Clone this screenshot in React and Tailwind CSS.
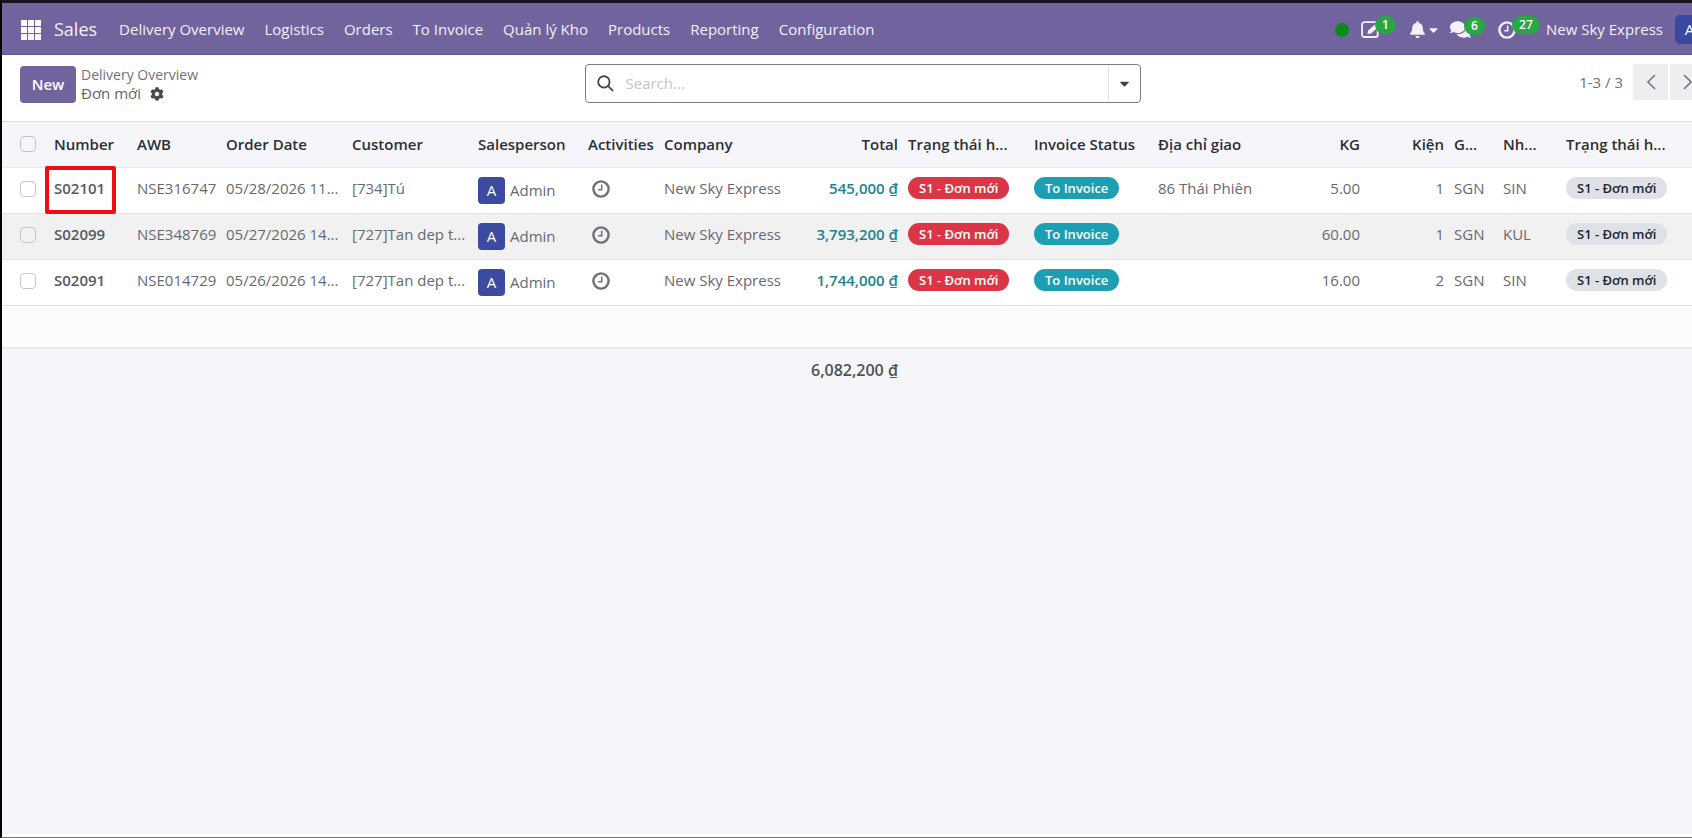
import React from "react";
import { FaBell, FaCaretDown, FaCog, FaComments } from "react-icons/fa";

const menu = [
  "Delivery Overview",
  "Logistics",
  "Orders",
  "To Invoice",
  "Quản lý Kho",
  "Products",
  "Reporting",
  "Configuration",
];

const orders = [
  { number: "S02101", awb: "NSE316747", date: "05/28/2026 11...", customer: "[734]Tú", total: "545,000 ₫", address: "86 Thái Phiên", kg: "5.00", pcs: "1", from: "SGN", to: "SIN", marked: true },
  { number: "S02099", awb: "NSE348769", date: "05/27/2026 14...", customer: "[727]Tan dep t...", total: "3,793,200 ₫", address: "", kg: "60.00", pcs: "1", from: "SGN", to: "KUL" },
  { number: "S02091", awb: "NSE014729", date: "05/26/2026 14...", customer: "[727]Tan dep t...", total: "1,744,000 ₫", address: "", kg: "16.00", pcs: "2", from: "SGN", to: "SIN" },
];

const headers = [
  ["Number"],
  ["AWB"],
  ["Order Date"],
  ["Customer"],
  ["Salesperson"],
  ["Activities"],
  ["Company"],
  ["Total", "text-right"],
  ["Trạng thái h..."],
  ["Invoice Status"],
  ["Địa chỉ giao"],
  ["KG", "text-right"],
  ["Kiện", "text-right"],
  ["G..."],
  ["Nh..."],
];

function Clock({ className }) {
  return (
    <svg viewBox="0 0 18 18" className={className} fill="none" stroke="currentColor" aria-hidden="true">
      <circle cx="9" cy="9" r="7.6" strokeWidth="2.4" />
      <path d="M9.7 4.6v5.1H6.2" strokeWidth="1.5" />
    </svg>
  );
}

function Count({ children }) {
  return (
    <span className="absolute bottom-[5px] left-[14px] rounded-full bg-[#28a745] px-[7px] text-[12px] leading-[18px] font-semibold text-white">
      {children}
    </span>
  );
}

function Tag({ className, children }) {
  return (
    <span className={`block w-fit rounded-full px-[11px] text-[13px] leading-[22px] font-semibold ${className}`}>
      {children}
    </span>
  );
}

function Tick({ label }) {
  return (
    <input
      type="checkbox"
      aria-label={label}
      className="block size-4 appearance-none rounded-[4px] border border-[#c4c6ca] bg-transparent"
    />
  );
}

function NavBar() {
  return (
    <nav className="flex h-[52px] items-center border-b border-[#5f5487] bg-[#71639e] px-4 pt-[2px] pr-[17px] text-[15px] text-[#f3f0fa]">
      <button aria-label="Apps" className="ml-[3px] mr-[13px] text-white">
        <svg viewBox="0 0 20 20" className="size-5" fill="currentColor" aria-hidden="true">
          <path d="M0 0h6v6H0zM7 0h6v6H7zM14 0h6v6h-6zM0 7h6v6H0zM7 7h6v6H7zM14 7h6v6h-6zM0 14h6v6H0zM7 14h6v6H7zM14 14h6v6h-6z" />
        </svg>
      </button>
      <a href="#sales" className="mr-[22px] text-[18px]">Sales</a>
      <div className="flex gap-5">
        {menu.map((m) => (
          <a key={m} href="#menu" className="whitespace-nowrap">{m}</a>
        ))}
      </div>
      <div className="ml-auto flex items-center">
        <span className="mr-[12px] size-[14px] rounded-full bg-[#0b8a1c]" />
        <button aria-label="Notes" className="relative mr-[30px]">
          <svg viewBox="0 0 18 18" className="size-[18px]" fill="none" stroke="currentColor" aria-hidden="true">
            <path d="M15 1.2H3.4A2.3 2.3 0 0 0 1.1 3.5v10.2A2.3 2.3 0 0 0 3.4 16h11a2.3 2.3 0 0 0 2.3-2.3V9" strokeWidth="1.8" />
            <path d="M6.5 13l.6-3.5L14 3.6l2.8 2.8-6.7 6z" fill="currentColor" stroke="none" />
          </svg>
          <Count>1</Count>
        </button>
        <button aria-label="Notifications" className="mr-[12px] flex items-center gap-[3px]">
          <FaBell className="size-[17px]" />
          <FaCaretDown className="h-[14px] w-[9px]" />
        </button>
        <button aria-label="Messages" className="relative mr-[27px]">
          <FaComments className="size-[21px]" />
          <Count>6</Count>
        </button>
        <button aria-label="Activities" className="relative mr-[30px]">
          <Clock className="size-[18px]" />
          <Count>27</Count>
        </button>
        <span className="mr-[12px] whitespace-nowrap">New Sky Express</span>
        <button aria-label="User menu" className="size-[29px] rounded-[5px] bg-[#3949a0] text-[15px] text-white">A</button>
      </div>
    </nav>
  );
}

function ControlBar() {
  return (
    <div className="flex h-[67px] items-start border-b border-[#d8dadd] bg-white px-[18px] pr-4 text-[15px]">
      <div className="flex min-w-0 flex-1 items-center gap-[5px] pt-[10px]">
        <button className="h-[37px] w-[56px] rounded-[4px] bg-[#71639e] font-semibold text-white">New</button>
        <div className="leading-[19px]">
          <a href="#overview" className="block text-[14px] font-medium text-[#71717f]">Delivery Overview</a>
          <div className="flex items-center gap-[9px] text-[#5f636a]">
            Đơn mới
            <button aria-label="Actions" className="text-[#454b54]"><FaCog className="size-[14px]" /></button>
          </div>
        </div>
      </div>
      <div className="mt-[9px] flex h-[39px] w-[556px] items-center rounded-[4px] border border-[#7b7d82]">
        <svg viewBox="0 0 18 18" className="ml-[11px] size-[17px] shrink-0 text-[#42464d]" fill="none" stroke="currentColor" strokeWidth="1.9" aria-hidden="true">
          <circle cx="7.3" cy="7.3" r="6" />
          <path d="M11.6 11.6l5.4 5.2" />
        </svg>
        <input aria-label="Search" placeholder="Search..." className="ml-[12px] min-w-0 flex-1 outline-none placeholder:text-[#c3c5cb]" />
        <button aria-label="Search options" className="flex h-full w-[32px] items-center justify-center border-l border-[#e3e4e7] text-[#3c4047]">
          <FaCaretDown className="size-[15px]" />
        </button>
      </div>
      <div className="flex flex-1 items-center justify-end gap-[2px] pt-[9px]">
        <span className="mr-[8px] text-[#6b6f76]">1-3 / 3</span>
        <button aria-label="Previous" className="flex h-[36px] w-[35px] items-center justify-center bg-[#eeeef0] text-[#74777d]">
          <svg viewBox="0 0 10 16" className="h-4 w-[10px]" fill="none" stroke="currentColor" strokeWidth="1.6" aria-hidden="true"><path d="M9 1L2 8l7 7" /></svg>
        </button>
        <button aria-label="Next" className="flex h-[36px] w-[35px] items-center justify-center bg-[#eeeef0] text-[#74777d]">
          <svg viewBox="0 0 10 16" className="h-4 w-[10px]" fill="none" stroke="currentColor" strokeWidth="1.6" aria-hidden="true"><path d="M1 1l7 7-7 7" /></svg>
        </button>
      </div>
    </div>
  );
}

function OrderRow({ o }) {
  return (
    <tr className="h-[46px] border-b border-[#e2e3e6] bg-white whitespace-nowrap even:bg-[#f1f1f1] [&>td]:px-[5px] [&>td]:pb-[3px]">
      <td className="pl-[18px]!"><Tick label={`Select ${o.number}`} /></td>
      <td className="relative font-semibold text-[#565a61]">
        {o.number}
        {o.marked && <span className="absolute -top-[2px] -left-[4px] h-[48px] w-[71px] rounded-[2px] border-4 border-[#f20c14]" />}
      </td>
      <td>{o.awb}</td>
      <td>{o.date}</td>
      <td>{o.customer}</td>
      <td className="pb-0!">
        <span className="flex items-center gap-[5px]">
          <span className="flex size-[27px] items-center justify-center rounded-[4px] bg-[#3c4ba0] text-[15px] text-white">A</span>
          Admin
        </span>
      </td>
      <td className="pl-[9px]!">
        <button aria-label="Plan activity" className="block text-[#6c7077]"><Clock className="size-[18px]" /></button>
      </td>
      <td>New Sky Express</td>
      <td className="text-right font-semibold text-[#1b8391]">{o.total}</td>
      <td className="pb-[5px]!"><Tag className="bg-[#dc3545] text-white">S1 - Đơn mới</Tag></td>
      <td className="pb-[5px]!"><Tag className="bg-[#1c9fb2] text-white">To Invoice</Tag></td>
      <td>{o.address}</td>
      <td className="text-right">{o.kg}</td>
      <td className="text-right">{o.pcs}</td>
      <td>{o.from}</td>
      <td>{o.to}</td>
      <td className="pb-[5px]!"><Tag className="bg-[#dee1e6] text-[#1f2430]">S1 - Đơn mới</Tag></td>
    </tr>
  );
}

function OrdersTable() {
  return (
    <table className="w-full table-fixed border-collapse text-[15px] text-[#666a70]">
      <colgroup>
        <col className="w-[47px]" />
        <col className="w-[83px]" />
        <col className="w-[89px]" />
        <col className="w-[126px]" />
        <col className="w-[126px]" />
        <col className="w-[110px]" />
        <col className="w-[76px]" />
        <col className="w-[123px]" />
        <col className="w-[121px]" />
        <col className="w-[126px]" />
        <col className="w-[124px]" />
        <col className="w-[124px]" />
        <col className="w-[88px]" />
        <col className="w-[84px]" />
        <col className="w-[49px]" />
        <col className="w-[63px]" />
        <col />
      </colgroup>
      <thead>
        <tr className="h-[45px] border-b border-[#e6e7ea] bg-[#f6f6fa] whitespace-nowrap text-[#2b2f36]">
          <th className="pl-[18px]"><Tick label="Select all" /></th>
          {headers.map(([label, align = "text-left"]) => (
            <th key={label} className={`px-[5px] font-semibold ${align}`}>{label}</th>
          ))}
          <th className="px-[5px] text-left font-semibold">Trạng thái h...</th>
        </tr>
      </thead>
      <tbody>
        {orders.map((o) => <OrderRow key={o.number} o={o} />)}
        <tr className="h-[43px] border-b-2 border-[#e9eaef] bg-[#fcfcfc]"><td colSpan={17} /></tr>
      </tbody>
      <tfoot>
        <tr className="h-[42px] text-[#4d5158]">
          <td colSpan={7} />
          <td colSpan={2} className="px-[5px] text-right text-base font-semibold">6,082,200 ₫</td>
          <td colSpan={8} />
        </tr>
      </tfoot>
    </table>
  );
}

export default function App() {
  return (
    <div className="flex min-h-screen flex-col overflow-hidden border-t-[3px] border-l-2 border-b border-t-[#17121c] border-l-black border-b-[#77747a] bg-[#f6f6fa] font-['Open_Sans','Noto_Sans',sans-serif]">
      <div className="w-[calc(100%+29px)]">
        <NavBar />
        <ControlBar />
        <OrdersTable />
      </div>
      <div className="mt-auto h-[3px] bg-white" />
    </div>
  );
}
